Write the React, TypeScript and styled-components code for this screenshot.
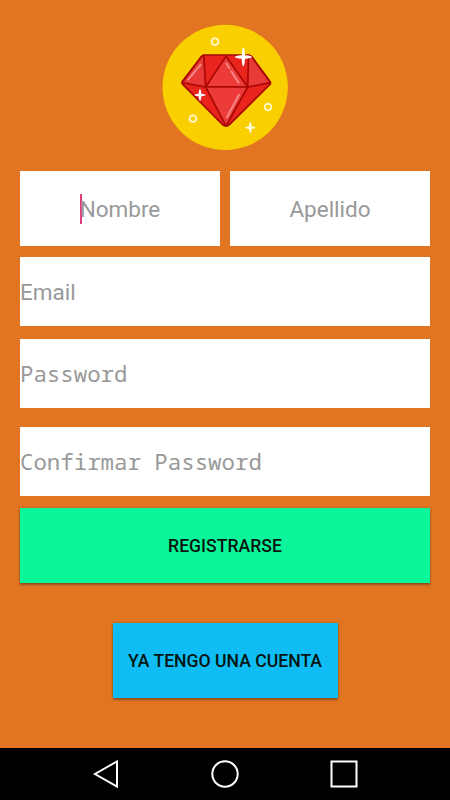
import React from "react";
import styled, { createGlobalStyle, css } from "styled-components";

const GlobalStyle = createGlobalStyle`
  * { box-sizing: border-box; }
  body { margin: 0; background: #e17522; }
`;

const Screen = styled.div`
  width: 450px;
  height: 800px;
  display: flex;
  flex-direction: column;
  overflow: hidden;
  background: #e17522;
  font-family: Roboto, sans-serif;
`;

const Form = styled.main`
  height: 747.5px;
  flex: none;
  padding: 15px 20px 0;
  display: flex;
  flex-direction: column;
  align-items: center;
`;

const Logo = styled.svg`
  width: 140px;
  height: 140px;
  flex: none;
  display: block;
`;

const NameRow = styled.div`
  width: 100%;
  margin-top: 16px;
  display: grid;
  grid-template-columns: 1fr 1fr;
  gap: 10px;
`;

const Field = styled.div<{ $centered?: boolean; $mono?: boolean; $gap?: number }>`
  width: 100%;
  height: ${(p) => (p.$centered ? 75 : 69)}px;
  flex: none;
  margin-top: ${(p) => p.$gap ?? 0}px;
  display: flex;
  align-items: center;
  justify-content: ${(p) => (p.$centered ? "center" : "flex-start")};
  background: #fff;
  color: #999;
  font-size: 22.5px;
  line-height: 30px;
  white-space: pre;
  padding-top: 1px;
  ${(p) =>
    p.$mono &&
    css`
      font-family: "Droid Sans Mono", "Noto Sans Mono", "DejaVu Sans Mono", monospace;
      font-size: 22.4px;
    `}
`;

const Caret = styled.span`
  width: 2px;
  height: 30px;
  margin: -1px -2px 0 0;
  background: #df3c7c;
`;

const Button = styled.button<{ $color: string; $width: string; $gap: number }>`
  width: ${(p) => p.$width};
  height: 75px;
  flex: none;
  margin: ${(p) => p.$gap}px 0 0;
  padding: 1px 0 0;
  border: 0;
  background: ${(p) => p.$color};
  box-shadow: 0 2px 2px rgba(80, 50, 20, 0.5), 0 0 2px rgba(80, 60, 20, 0.4);
  color: #06150f;
  font: 500 17.6px/24px Roboto, sans-serif;
  white-space: nowrap;
`;

const NavBar = styled.nav`
  flex: 1;
  background: #000;
  display: flex;
  justify-content: center;
  align-items: center;
  gap: 89px;
`;

const NavIcon = styled.svg`
  width: 30px;
  height: 30px;
  fill: none;
  stroke: #fff;
  stroke-width: 2;
`;

function GemLogo() {
  return (
    <Logo viewBox="0 0 420 420" aria-label="Gema">
      <circle cx="210.5" cy="217" r="188" fill="#facf00" />
      <g stroke="#a90805" strokeWidth="5" strokeLinejoin="round" strokeLinecap="round">
        <path
          d="M148 120H280Q286 120 290 125L344 198Q349 204 344 209L224 328Q213 338 202 328L84 209Q79 204 83 198L139 125Q142 120 148 120Z"
          fill="#e9241d"
        />
        <path d="M146 121L152 216L81 203L139 125Z" fill="#e83b38" />
        <path d="M281 121L278 216L346 203L290 125Z" fill="#e83b38" />
        <path d="M213 124L152 216H278Z" fill="#ec3b39" />
        <path d="M152 216H278L213 333Z" fill="#ec3b39" />
      </g>
      <g stroke="#f58683" strokeWidth="6" strokeLinecap="round">
        <path d="M137 149L99 194M214 145L223 160M229 169L251 203M252 239L216 307" />
      </g>
      <g fill="none" stroke="#fff7bd" strokeWidth="6">
        <circle cx="180" cy="80" r="10" />
        <circle cx="339" cy="276" r="10" />
        <circle cx="114" cy="311" r="10" />
      </g>
      <g fill="#fff">
        <path d="M265 98Q269 99 270 121Q291 123 291 126Q291 130 270 131Q269 152 265 154Q261 152 260 131Q240 130 239 126Q240 123 260 121Q261 99 265 98Z" />
        <path d="M135 222Q138 223 139 236Q151 237 152 240Q151 243 139 244Q138 257 135 258Q132 257 131 244Q119 243 118 240Q119 237 131 236Q132 223 135 222Z" />
        <path fill="#fffbd7" d="M286 321Q289 322 290 334Q301 335 302 338Q301 341 290 342Q289 354 286 355Q283 354 282 342Q271 341 270 338Q271 335 282 334Q283 322 286 321Z" />
      </g>
    </Logo>
  );
}

export default function App() {
  return (
    <>
      <GlobalStyle />
      <Screen>
        <Form>
          <GemLogo />
          <NameRow>
            <Field $centered>
              <Caret />
              <span>Nombre</span>
            </Field>
            <Field $centered>Apellido</Field>
          </NameRow>
          <Field $gap={11.4}>Email</Field>
          <Field $mono $gap={12.7}>Password</Field>
          <Field $mono $gap={19.3}>Confirmar Password</Field>
          <Button $color="#0bf59a" $width="100%" $gap={11.3}>REGISTRARSE</Button>
          <Button $color="#0fbcf3" $width="225px" $gap={40}>YA TENGO UNA CUENTA</Button>
        </Form>
        <NavBar>
          <NavIcon viewBox="0 0 30 30" aria-label="Atrás">
            <path d="M26 2.5V27.5L4 15Z" />
          </NavIcon>
          <NavIcon viewBox="0 0 30 30" aria-label="Inicio">
            <circle cx="15" cy="15" r="12.7" />
          </NavIcon>
          <NavIcon viewBox="0 0 30 30" aria-label="Recientes">
            <path d="M2.5 2.5H27.5V27.5H2.5Z" />
          </NavIcon>
        </NavBar>
      </Screen>
    </>
  );
}
